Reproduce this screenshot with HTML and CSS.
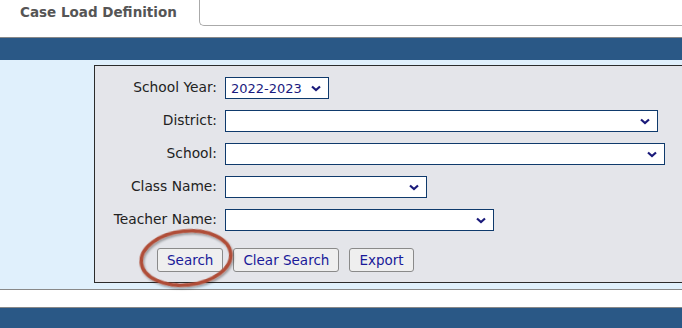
FILE: index.html
```html
<!DOCTYPE html>
<html>
<head>
<meta charset="utf-8">
<link rel="stylesheet" href="styles.css">
</head>
<body>
<div class="tabs">
  <div class="tab">Case Load Definition</div>
  <div class="tab-rest"></div>
</div>
<div class="spacer"></div>
<div class="bar"></div>
<div class="content">
  <div class="panel">
    <div class="form">
      <label>School Year:</label>
      <div class="select w-year"><span>2022-2023</span><svg class="chev" width="10" height="7" viewBox="0 0 10 7"><path d="M1 1.5 L5 5 L9 1.5" fill="none" stroke="#1a1a7a" stroke-width="2.2"/></svg></div>
      <label>District:</label>
      <div class="select w-district"><span></span><svg class="chev" width="10" height="7" viewBox="0 0 10 7"><path d="M1 1.5 L5 5 L9 1.5" fill="none" stroke="#1a1a7a" stroke-width="2.2"/></svg></div>
      <label>School:</label>
      <div class="select w-school"><span></span><svg class="chev" width="10" height="7" viewBox="0 0 10 7"><path d="M1 1.5 L5 5 L9 1.5" fill="none" stroke="#1a1a7a" stroke-width="2.2"/></svg></div>
      <label>Class Name:</label>
      <div class="select w-class"><span></span><svg class="chev" width="10" height="7" viewBox="0 0 10 7"><path d="M1 1.5 L5 5 L9 1.5" fill="none" stroke="#1a1a7a" stroke-width="2.2"/></svg></div>
      <label>Teacher Name:</label>
      <div class="select w-teacher"><span></span><svg class="chev" width="10" height="7" viewBox="0 0 10 7"><path d="M1 1.5 L5 5 L9 1.5" fill="none" stroke="#1a1a7a" stroke-width="2.2"/></svg></div>
    </div>
    <div class="buttons">
      <button class="btn">Search</button>
      <button class="btn">Clear Search</button>
      <button class="btn">Export</button>
    </div>
    <svg class="circle" width="112" height="72" viewBox="0 0 112 72">
      <defs>
        <filter id="sh" x="-20%" y="-20%" width="140%" height="140%">
          <feDropShadow dx="1" dy="2" stdDeviation="1.2" flood-color="#000" flood-opacity="0.35"/>
        </filter>
      </defs>
      <ellipse cx="56" cy="36" rx="45" ry="27" fill="none" stroke="#b04e38" stroke-width="3.5" transform="rotate(-6 56 36)" filter="url(#sh)"/>
    </svg>
  </div>
</div>
<div class="white"></div>
<div class="bar bottom"></div>
</body>
</html>
```
FILE: styles.css
```css
html, body {
  margin: 0;
  padding: 0;
  background: #ffffff;
  font-family: "DejaVu Sans", Verdana, sans-serif;
  font-size: 13px;
  overflow: hidden;
}

.tabs {
  display: flex;
  height: 26px;
}

.tab {
  width: 179px;
  padding-left: 20px;
  height: 25px;
  line-height: 25px;
  font-size: 13.5px;
  font-weight: bold;
  color: #555555;
  background: #fff;
}

.tab-rest {
  flex: 1;
  border-left: 1px solid #aaaaaa;
  border-bottom: 1px solid #aaaaaa;
  border-bottom-left-radius: 5px;
  box-sizing: border-box;
  height: 26px;
}

.spacer {
  height: 11px;
  border-bottom: 1px solid #888888;
}

.bar {
  height: 22px;
  background: #2a5886;
}

.bar.bottom {
  height: 30px;
}

.content {
  background: #e0f0fc;
  padding: 5px 0 6px 94px;
  border-bottom: 1px solid #888888;
}

.panel {
  position: relative;
  background: #e4e5ea;
  border: 1px solid #2b2b2b;
  border-right: none;
  padding: 11px 0 10px 0;
}

.form {
  display: grid;
  grid-template-columns: 122px auto;
  column-gap: 8px;
  row-gap: 11px;
  align-items: center;
  justify-items: start;
}

.form label {
  justify-self: end;
  color: #222222;
  font-size: 13.8px;
  white-space: nowrap;
  margin-top: -2px;
}

.select {
  box-sizing: border-box;
  height: 22px;
  border: 1px solid #0f3a6c;
  background: #ffffff;
  display: flex;
  align-items: center;
  justify-content: space-between;
  padding: 0 7px 0 5px;
  color: #1a1a80;
}

.chev {
  display: block;
  margin-top: 1px;
}

.w-year { width: 104px; }
.w-district { width: 433px; }
.w-school { width: 440px; }
.w-class { width: 202px; }
.w-teacher { width: 269px; }

.buttons {
  display: flex;
  gap: 10px;
  margin-top: 17px;
  padding-left: 62px;
}

.btn {
  height: 24px;
  padding: 0 9px;
  font-family: "DejaVu Sans", Verdana, sans-serif;
  font-size: 13.5px;
  color: #1a1a99;
  background: #efefef;
  border: 1px solid #8a8a8a;
  border-radius: 3px;
}

.circle {
  position: absolute;
  left: 35px;
  top: 156px;
  pointer-events: none;
}

.white {
  height: 17px;
  border-bottom: 1px solid #888888;
}
```
